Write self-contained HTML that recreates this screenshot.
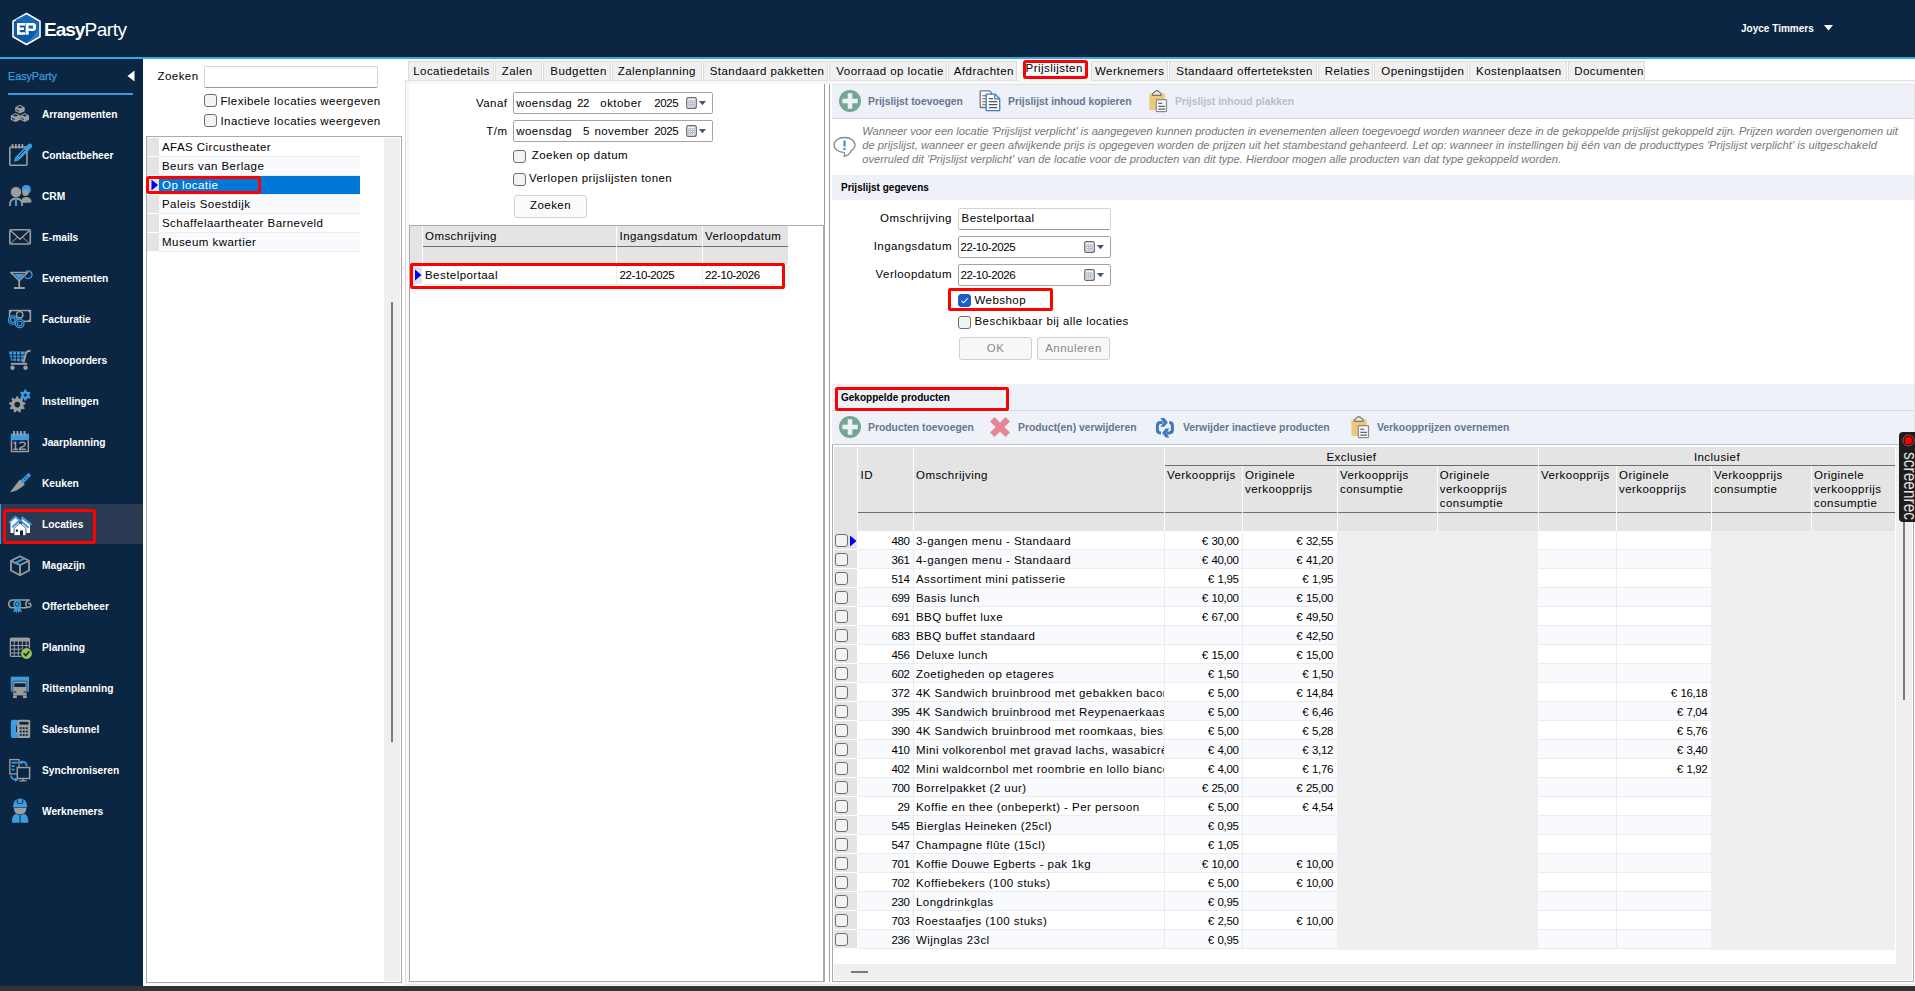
<!DOCTYPE html><html><head><meta charset="utf-8"><style>
html,body{margin:0;padding:0}
body{width:1915px;height:991px;overflow:hidden;position:relative;background:#fff;font-family:"Liberation Sans",sans-serif;color:#000}
.a{position:absolute}
.t{position:absolute;white-space:nowrap;line-height:1}
.b{font-weight:bold}
.cbx{width:11px;height:11px;border:1px solid #6e6e6e;border-radius:3px;background:#f3f3f3}
.cbx.on{background:#1a5fc8;border-color:#1a5fc8}
.cbx svg{position:absolute;left:-1px;top:-1px}
.sb{color:#fff;font-weight:bold;transform:scaleX(0.88);transform-origin:0 0}
.tb{color:#65768f;font-weight:bold;transform:scaleX(0.9);transform-origin:0 0}
.tbd{color:#b7bfcb;font-weight:bold;transform:scaleX(0.9);transform-origin:0 0}
.it{font-style:italic;color:#777}
.inp{position:absolute;box-sizing:border-box;border:1px solid #a4a4a4;border-radius:2px;background:#fff}
.btn{position:absolute;box-sizing:border-box;border:1px solid #d0d0d0;border-radius:3px;background:#fbfbfb}
.red{position:absolute;box-sizing:border-box;border:3px solid #f00;border-radius:2px}
.clip{overflow:hidden}
</style></head><body>

<div class="a" style="left:0px;top:0px;width:1915px;height:57px;background:#0b2642"></div>
<div class="a" style="left:0px;top:57px;width:1915px;height:2px;background:#35a8e0"></div>
<svg class="a" style="left:11px;top:12px" width="31" height="34" viewBox="0 0 31 34">
<path d="M15.5 1.5 L29 9.3 L29 24.7 L15.5 32.5 L2 24.7 L2 9.3 Z" fill="#0f5aa6" stroke="#fff" stroke-width="1.6"/>
<path d="M15.5 3 L27.5 10 L27.5 19 L4 7.5 Z" fill="#1a6fc0" opacity="0.7"/>
<path d="M27.5 17 L27.5 24 L15.5 31 L21 26 Z" fill="#2a8ad8" opacity="0.8"/>
<path d="M6 11 H14 V13.6 H8.8 V15.6 H13 V18 H8.8 V20.2 H14 V22.8 H6 Z" fill="#fff"/>
<path d="M14.6 11 H22 Q25 11 25 14.2 V15.8 Q25 19 22 19 H17.6 V22.8 H14.6 Z M17.6 13.5 V16.5 H21.4 Q22.2 16.5 22.2 15.6 V14.4 Q22.2 13.5 21.4 13.5 Z" fill="#fff"/>
</svg>
<div class="t" style="left:44px;top:20.22px;font-size:19px;color:#fff"><span style="font-weight:bold;letter-spacing:-1px">Easy</span><span style="letter-spacing:-0.4px">Party</span></div>
<div class="t sb" style="top:22.95px;font-size:11.4px;left:1741.00px;">Joyce Timmers</div>
<svg class="a" style="left:1824px;top:25px" width="9" height="6" viewBox="0 0 9 6"><path d="M0 0H9L4.5 5.5Z" fill="#fff"/></svg>
<div class="a" style="left:0px;top:59px;width:143px;height:927px;background:#0b2642"></div>
<div class="t" style="left:8px;top:70.91px;font-size:11.8px;color:#3f9ddf;transform:scaleX(0.91);transform-origin:0 0;-webkit-text-stroke:0.25px #3f9ddf">EasyParty</div>
<svg class="a" style="left:127px;top:70px" width="8" height="12" viewBox="0 0 8 12"><path d="M7.5 0.5V11.5L0.5 6Z" fill="#fff"/></svg>
<div class="a" style="left:8px;top:93px;width:125px;height:1.5px;background:#3a9ad9"></div>
<div class="a" style="left:0px;top:504px;width:143px;height:40px;background:#2b3a52"></div>
<div class="a" style="left:0px;top:504px;width:1px;height:40px;background:#3a9ad9"></div>
<svg class="a" style="left:0px;top:96px" width="40" height="31" viewBox="0 0 40 31"><path d="M19.95,8.8 L24.7,11.149000000000001 L24.7,15.151 L19.95,17.5 L15.2,15.151 L15.2,11.149000000000001Z" fill="#9d9d9d"/><path d="M19.95,10.100000000000001 L22.7,11.149000000000001 L19.95,12.198 L17.2,11.149000000000001Z" fill="#0b2642"/><path d="M16.4,13.149000000000001 L18.95,14.498000000000001 L18.95,15.7 L16.4,14.350999999999999Z" fill="#0b2642"/><path d="M15.6,17.0 L20.4,19.457 L20.4,23.643 L15.6,26.1 L10.8,23.643 L10.8,19.457Z" fill="#9d9d9d"/><path d="M15.6,18.3 L18.4,19.457 L15.6,20.614 L12.8,19.457Z" fill="#0b2642"/><path d="M12.0,21.457 L14.6,22.914 L14.6,24.3 L12.0,22.843Z" fill="#0b2642"/><path d="M24.7,17.0 L29.0,19.457 L29.0,23.643 L24.7,26.1 L20.4,23.643 L20.4,19.457Z" fill="#9d9d9d"/><path d="M24.7,18.3 L27.0,19.457 L24.7,20.614 L22.4,19.457Z" fill="#0b2642"/><path d="M21.599999999999998,21.457 L23.7,22.914 L23.7,24.3 L21.599999999999998,22.843Z" fill="#0b2642"/></svg>
<div class="t sb" style="top:107.98px;font-size:11.6px;left:42.00px;">Arrangementen</div>
<svg class="a" style="left:0px;top:137px" width="40" height="31" viewBox="0 0 40 31"><rect x="9.8" y="10" width="17.2" height="18.2" rx="1" fill="none" stroke="#9d9d9d" stroke-width="1.6"/><path d="M12.5 7V11.5M15.8 7V11.5M19.1 7V11.5M22.4 7V11.5" stroke="#9d9d9d" stroke-width="1.8"/><path d="M17.2 21.6 L27.3 11.5" stroke="#3d9be0" stroke-width="4.6"/><path d="M28.3 10.5 L29.8 9" stroke="#3d9be0" stroke-width="4.6" stroke-linecap="round"/><path d="M14 24.8 L15.2 19.8 L19 23.6Z" fill="#3d9be0"/><path d="M18.5 19.5 L25 13" stroke="#0b2642" stroke-width="1"/></svg>
<div class="t sb" style="top:148.98px;font-size:11.6px;left:42.00px;">Contactbeheer</div>
<svg class="a" style="left:0px;top:178px" width="40" height="31" viewBox="0 0 40 31"><circle cx="26.3" cy="11.5" r="4.6" fill="#3d9be0"/><circle cx="25.5" cy="14.8" r="3.2" fill="#9d9d9d"/><path d="M21 25 Q21 19 26 19 Q31.5 19 31.5 24.5Z" fill="#9d9d9d"/><circle cx="16" cy="14.1" r="5.6" fill="#9d9d9d" stroke="#0b2642" stroke-width="0.8"/><path d="M9.8 28 Q9.5 20.5 16 20.5 Q22.5 20.5 22.2 28" fill="none" stroke="#9d9d9d" stroke-width="1.8"/><path d="M16 20.5V28" stroke="#3d9be0" stroke-width="2.2"/></svg>
<div class="t sb" style="top:189.98px;font-size:11.6px;left:42.00px;">CRM</div>
<svg class="a" style="left:0px;top:219px" width="40" height="31" viewBox="0 0 40 31"><rect x="9.8" y="10.8" width="20.5" height="14.2" rx="1" fill="none" stroke="#9d9d9d" stroke-width="1.6"/><path d="M10.5 11.5 L20 20.2 L29.5 11.5" fill="none" stroke="#9d9d9d" stroke-width="1.4"/><path d="M10.5 24.5 L17 18.5M29.5 24.5 L23 18.5" stroke="#9d9d9d" stroke-width="1"/></svg>
<div class="t sb" style="top:230.98px;font-size:11.6px;left:42.00px;">E-mails</div>
<svg class="a" style="left:0px;top:260px" width="40" height="31" viewBox="0 0 40 31"><path d="M26 11.5 A3.8 3.8 0 1 1 25 16.8" fill="none" stroke="#3d9be0" stroke-width="1.4"/><path d="M10.8 12.5 H27.6 L19.2 20.8Z" fill="none" stroke="#9d9d9d" stroke-width="1.6" stroke-linejoin="round"/><path d="M13.8 14 H24.6 L19.2 19.3Z" fill="#3d9be0"/><path d="M19.2 20.5 V27.5M14 28 H24.8" stroke="#9d9d9d" stroke-width="1.8"/></svg>
<div class="t sb" style="top:271.98px;font-size:11.6px;left:42.00px;">Evenementen</div>
<svg class="a" style="left:0px;top:301px" width="40" height="31" viewBox="0 0 40 31"><rect x="9.6" y="9.5" width="20.8" height="10.8" fill="none" stroke="#9d9d9d" stroke-width="1.5"/><path d="M9.6 9.5h3l-3 3zM30.4 9.5h-3l3 3zM30.4 20.3h-3l3-3z" fill="#9d9d9d"/><circle cx="19.7" cy="13.8" r="3.2" fill="none" stroke="#9d9d9d" stroke-width="1.4"/><circle cx="12.8" cy="19.1" r="4.3" fill="#0b2642" stroke="#3d9be0" stroke-width="1.3"/><circle cx="12.8" cy="19.1" r="2.4" fill="none" stroke="#3d9be0" stroke-width="1.2"/><circle cx="19.7" cy="22.4" r="4.3" fill="#0b2642" stroke="#3d9be0" stroke-width="1.3"/><circle cx="19.7" cy="22.4" r="2.4" fill="none" stroke="#3d9be0" stroke-width="1.2"/></svg>
<div class="t sb" style="top:312.98px;font-size:11.6px;left:42.00px;">Facturatie</div>
<svg class="a" style="left:0px;top:342px" width="40" height="31" viewBox="0 0 40 31"><path d="M8.9 9.6 H24.8 L23.3 19.6 L11 18.6Z" fill="#3d9be0"/><path d="M12.8 10V18.5M16.5 10V19M20.3 10V19.3M9.5 13H24.3M10 16H23.8" stroke="#0b2642" stroke-width="1"/><path d="M23.5 20.5 L26 11 Q26.8 8.8 30.5 8.7" fill="none" stroke="#9d9d9d" stroke-width="2"/><path d="M10.8 21.8 H27.2" stroke="#9d9d9d" stroke-width="2"/><circle cx="12.5" cy="25.7" r="2.2" fill="#9d9d9d"/><circle cx="25.5" cy="25.7" r="2.2" fill="#9d9d9d"/></svg>
<div class="t sb" style="top:353.98px;font-size:11.6px;left:42.00px;">Inkooporders</div>
<svg class="a" style="left:0px;top:383px" width="40" height="31" viewBox="0 0 40 31"><path d="M16.58,13.33 L18.02,13.33 L18.90,15.61 L19.92,15.98 L22.06,14.80 L23.17,15.73 L22.38,18.04 L22.92,18.98 L25.32,19.45 L25.57,20.88 L23.48,22.14 L23.29,23.20 L24.82,25.11 L24.10,26.36 L21.68,25.98 L20.86,26.68 L20.81,29.12 L19.45,29.62 L17.84,27.78 L16.76,27.78 L15.15,29.62 L13.79,29.12 L13.74,26.68 L12.92,25.98 L10.50,26.36 L9.78,25.11 L11.31,23.20 L11.12,22.14 L9.03,20.88 L9.28,19.45 L11.68,18.98 L12.22,18.04 L11.43,15.73 L12.54,14.80 L14.68,15.98 L15.70,15.61Z" fill="#9d9d9d"/><circle cx="17.3" cy="21.6" r="2.8" fill="#0b2642"/><path d="M24.57,6.55 L26.03,6.55 L26.79,8.50 L27.67,9.01 L29.74,8.69 L30.47,9.96 L29.17,11.59 L29.17,12.61 L30.47,14.24 L29.74,15.51 L27.67,15.19 L26.79,15.70 L26.03,17.65 L24.57,17.65 L23.81,15.70 L22.93,15.19 L20.86,15.51 L20.13,14.24 L21.43,12.61 L21.43,11.59 L20.13,9.96 L20.86,8.69 L22.93,9.01 L23.81,8.50Z" fill="#3d9be0"/><circle cx="25.3" cy="12.1" r="1.6" fill="#0b2642"/></svg>
<div class="t sb" style="top:394.98px;font-size:11.6px;left:42.00px;">Instellingen</div>
<svg class="a" style="left:0px;top:424px" width="40" height="31" viewBox="0 0 40 31"><rect x="10.8" y="9.6" width="18.2" height="6.6" fill="#3d9be0"/><path d="M14 7V11.5M17.5 7V11.5M21 7V11.5M24.5 7V11.5" stroke="#9d9d9d" stroke-width="2"/><path d="M11.5 16.2V27.5H28.3V16.2" fill="none" stroke="#9d9d9d" stroke-width="1.5"/><path d="M13.5 19.2 L15.5 18.3 V25.2M13.3 25.2H17.8M19.3 19.6 Q19.8 18.3 22.3 18.3 Q25.3 18.3 25.3 20.3 Q25.3 21.8 22.5 22.8 Q19.6 23.8 19.6 25.2H25.8" fill="none" stroke="#9d9d9d" stroke-width="1.5"/></svg>
<div class="t sb" style="top:435.98px;font-size:11.6px;left:42.00px;">Jaarplanning</div>
<svg class="a" style="left:0px;top:465px" width="40" height="31" viewBox="0 0 40 31"><path d="M9.8 27.6 L19.8 14.6 L25 19.2 Q19 25.5 9.8 27.6Z" fill="#9d9d9d"/><path d="M22.8 16.2 L28.6 10.4" stroke="#3d9be0" stroke-width="4" stroke-linecap="round"/><circle cx="25" cy="14" r="0.7" fill="#0b2642"/><circle cx="27" cy="12" r="0.7" fill="#0b2642"/></svg>
<div class="t sb" style="top:476.98px;font-size:11.6px;left:42.00px;">Keuken</div>
<svg class="a" style="left:0px;top:506px" width="40" height="31" viewBox="0 0 40 31"><path d="M10.5 14.5 L15.5 10.5 L19 13.5 V27 H10.5Z" fill="#fff"/><path d="M22 12.5 L30 18.5 V27 H22Z" fill="#fff"/><path d="M9 16.6 L15.5 10.8 L19.5 14.3" fill="none" stroke="#3d9be0" stroke-width="1.8"/><path d="M21.3 12.6 L22.5 11.5 L31.5 18.7" fill="none" stroke="#3d9be0" stroke-width="1.8"/><path d="M14 22.5 L20 16.8 L26 22.5 V29.5 H14Z" fill="#fff" stroke="#2b3a52" stroke-width="0.8"/><path d="M12.2 21.3 L20 14.1 L28.6 21.8" fill="none" stroke="#3d9be0" stroke-width="1.9"/><rect x="15.8" y="23.5" width="2.2" height="2.2" fill="#0b2642"/><rect x="20" y="24.5" width="3" height="5" fill="#0b2642"/></svg>
<div class="t sb" style="top:517.98px;font-size:11.6px;left:42.00px;">Locaties</div>
<svg class="a" style="left:0px;top:547px" width="40" height="31" viewBox="0 0 40 31"><path d="M20 9.2 L29 13.7 L29 23.5 L20 28.2 L11 23.5 L11 13.7Z" fill="none" stroke="#9d9d9d" stroke-width="1.8" stroke-linejoin="round"/><path d="M11 13.7 L20 18 L29 13.7M20 18V28.2" fill="none" stroke="#9d9d9d" stroke-width="1.8"/><path d="M13.2 16 L23.5 10.8 L25.5 12 L15 17.3Z" fill="#3d9be0"/></svg>
<div class="t sb" style="top:558.98px;font-size:11.6px;left:42.00px;">Magazijn</div>
<svg class="a" style="left:0px;top:588px" width="40" height="31" viewBox="0 0 40 31"><path d="M13 12 H29.5 M13 19.8 H27" stroke="#9d9d9d" stroke-width="1.6"/><path d="M13 12 Q8.8 12 8.8 15.9 Q8.8 19.8 13 19.8" fill="none" stroke="#9d9d9d" stroke-width="1.6"/><path d="M29.5 12 Q25.5 13 25.8 16.5 Q26.3 19.8 29 19.2 Q31.5 18.3 30.8 16.3 Q30 14.6 28.2 15.8" fill="none" stroke="#9d9d9d" stroke-width="1.5"/><path d="M15.2 18.5 L13 24.5 L15.5 23.3 L16.8 25 L18 19.5ZM19.5 18.5 L22 24.5 L19.6 23.3 L18.3 25 L17 19.5Z" fill="#3d9be0"/><circle cx="17.3" cy="16.2" r="3.9" fill="#3d9be0"/><circle cx="17.3" cy="16.2" r="2" fill="none" stroke="#0b2642" stroke-width="0.8"/></svg>
<div class="t sb" style="top:599.98px;font-size:11.6px;left:42.00px;">Offertebeheer</div>
<svg class="a" style="left:0px;top:629px" width="40" height="31" viewBox="0 0 40 31"><rect x="10.4" y="9.3" width="19" height="18" rx="1" fill="none" stroke="#9d9d9d" stroke-width="1.3"/><rect x="10" y="8.8" width="19.8" height="3.8" rx="1" fill="#9d9d9d"/><path d="M14.3 12V27.5M18.4 12V27.5M22.3 12V27.5M26.2 12V27.5M10.4 16.5H29.4M10.4 20.2H29.4M10.4 24H29.4" stroke="#9d9d9d" stroke-width="1"/><circle cx="26.5" cy="24.5" r="6" fill="#0b2642"/><circle cx="26.5" cy="24.5" r="5.4" fill="#9cc54a"/><path d="M23.6 24.3 L25.7 26.5 L29.5 22.3" fill="none" stroke="#0b2642" stroke-width="1.6"/></svg>
<div class="t sb" style="top:640.98px;font-size:11.6px;left:42.00px;">Planning</div>
<svg class="a" style="left:0px;top:670px" width="40" height="31" viewBox="0 0 40 31"><rect x="10.8" y="6.7" width="18.2" height="14.9" fill="#3d9be0"/><rect x="12.8" y="11.2" width="14.1" height="14.5" rx="1.5" fill="#9d9d9d" stroke="#0b2642" stroke-width="0.6"/><rect x="14.2" y="13.3" width="11.3" height="3.8" rx="1" fill="#0b2642"/><path d="M13.5 22H16.3M23.4 22H26.2" stroke="#0b2642" stroke-width="1"/><rect x="13" y="25.5" width="3.8" height="2.6" fill="#9d9d9d"/><rect x="23" y="25.5" width="3.8" height="2.6" fill="#9d9d9d"/></svg>
<div class="t sb" style="top:681.98px;font-size:11.6px;left:42.00px;">Rittenplanning</div>
<svg class="a" style="left:0px;top:711px" width="40" height="31" viewBox="0 0 40 31"><rect x="17" y="8.8" width="13.2" height="18.2" rx="1.5" fill="#9d9d9d"/><rect x="19.3" y="10.8" width="9.3" height="2.8" fill="#0b2642"/><rect x="19.8" y="16.2" width="1.9" height="1.9" fill="#0b2642"/><rect x="19.8" y="19.6" width="1.9" height="1.9" fill="#0b2642"/><rect x="19.8" y="23" width="1.9" height="1.9" fill="#0b2642"/><rect x="22.8" y="16.2" width="1.9" height="1.9" fill="#0b2642"/><rect x="22.8" y="19.6" width="1.9" height="1.9" fill="#0b2642"/><rect x="22.8" y="23" width="1.9" height="1.9" fill="#0b2642"/><rect x="25.8" y="16.2" width="1.9" height="1.9" fill="#0b2642"/><rect x="25.8" y="19.6" width="1.9" height="1.9" fill="#0b2642"/><rect x="25.8" y="23" width="1.9" height="1.9" fill="#0b2642"/><path d="M12.5 8.8 H16.2 Q17.6 8.8 17.6 10.5 V13.5 Q17.6 14.8 16 15 V20.8 Q17.6 21 17.6 22.3 V25.3 Q17.6 27 16.2 27 H12.5 Q10.8 27 10.8 24.5 V11.3 Q10.8 8.8 12.5 8.8Z" fill="#3d9be0"/></svg>
<div class="t sb" style="top:722.98px;font-size:11.6px;left:42.00px;">Salesfunnel</div>
<svg class="a" style="left:0px;top:752px" width="40" height="31" viewBox="0 0 40 31"><rect x="9.8" y="7.6" width="9.2" height="14.3" fill="none" stroke="#9d9d9d" stroke-width="1.3"/><path d="M11.5 10.6H17.6M11.5 14.1H14.5M11.5 17.6H14.5" stroke="#3d9be0" stroke-width="1.8"/><rect x="17.3" y="15.5" width="12.3" height="11" fill="#0b2642" stroke="#9d9d9d" stroke-width="1.5"/><path d="M19.3 28.8H26.6M23 26.5V28.8" stroke="#9d9d9d" stroke-width="1.3"/><path d="M21 10.3 Q26 8.6 26.8 14" fill="none" stroke="#3d9be0" stroke-width="1.8"/><path d="M19 10.6 L22.5 8 L22.3 12.6Z" fill="#3d9be0"/><path d="M11 23.5 Q11.5 27.6 16.5 28" fill="none" stroke="#3d9be0" stroke-width="1.8"/><path d="M18.3 28 L15 30 L15.2 25.6Z" fill="#3d9be0"/></svg>
<div class="t sb" style="top:763.98px;font-size:11.6px;left:42.00px;">Synchroniseren</div>
<svg class="a" style="left:0px;top:793px" width="40" height="31" viewBox="0 0 40 31"><path d="M12.9 14.2 Q13.3 5.6 20.1 5.6 Q26.9 5.6 27.3 14.2Z" fill="#3d9be0"/><path d="M17.3 6.2 V10 Q20 11.2 22.8 10 V6.2" fill="none" stroke="#0b2642" stroke-width="0.9"/><path d="M13.8 14.8 Q14 21.5 20.1 21.5 Q26.2 21.5 26.4 14.8Z" fill="#9d9d9d"/><path d="M11.9 29.8 Q11.5 21.6 16.5 20.8 Q20 24 23.7 20.8 Q28.7 21.6 28.3 29.8Z" fill="#3d9be0"/><path d="M20.1 23 V30" stroke="#0b2642" stroke-width="1"/></svg>
<div class="t sb" style="top:804.98px;font-size:11.6px;left:42.00px;">Werknemers</div>
<div class="red" style="left:3px;top:509px;width:93px;height:34.5px;border-radius:3px"></div>
<div class="t " style="top:71.37px;font-size:11.5px;letter-spacing:0.45px;left:157.50px;">Zoeken</div>
<div class="inp" style="left:204px;top:66px;width:174px;height:22px;border-color:#d4d4d4;border-bottom-color:#9a9a9a"></div>
<div class="a cbx" style="left:204px;top:94px"></div>
<div class="t " style="top:96.27px;font-size:11.5px;letter-spacing:0.45px;left:220.40px;">Flexibele locaties weergeven</div>
<div class="a cbx" style="left:204px;top:114px"></div>
<div class="t " style="top:116.37px;font-size:11.5px;letter-spacing:0.45px;left:220.40px;">Inactieve locaties weergeven</div>
<div class="a" style="left:146px;top:136px;width:256px;height:847px;border:1px solid #a9a9ae;box-sizing:border-box"></div>
<div class="a" style="left:384px;top:138px;width:16px;height:843px;background:#efefef"></div>
<div class="a" style="left:391px;top:302px;width:2px;height:440px;background:#7a7a7a"></div>
<div class="a" style="left:147px;top:138px;width:12px;height:18px;background:#e4e4e4"></div>
<div class="a" style="left:159px;top:138px;width:201px;height:18px;background:#fff"></div>
<div class="a" style="left:159px;top:156px;width:201px;height:1px;background:#ececec"></div>
<div class="t " style="top:141.87px;font-size:11.5px;letter-spacing:0.45px;left:162.00px;">AFAS Circustheater</div>
<div class="a" style="left:147px;top:157px;width:12px;height:18px;background:#e4e4e4"></div>
<div class="a" style="left:159px;top:157px;width:201px;height:18px;background:#f8fafd"></div>
<div class="a" style="left:159px;top:175px;width:201px;height:1px;background:#ececec"></div>
<div class="t " style="top:160.87px;font-size:11.5px;letter-spacing:0.45px;left:162.00px;">Beurs van Berlage</div>
<div class="a" style="left:147px;top:176px;width:12px;height:18px;background:#e4e4e4"></div>
<div class="a" style="left:159px;top:176px;width:201px;height:18px;background:#0078d7"></div>
<div class="a" style="left:159px;top:194px;width:201px;height:1px;background:#ececec"></div>
<div class="t " style="top:179.87px;font-size:11.5px;letter-spacing:0.45px;left:162.00px;color:#fff">Op locatie</div>
<svg class="a" style="left:151px;top:179px" width="8" height="12" viewBox="0 0 8 12"><path d="M0.5 0.5V11.5L7 6Z" fill="#0000f0"/></svg>
<div class="a" style="left:147px;top:195px;width:12px;height:18px;background:#e4e4e4"></div>
<div class="a" style="left:159px;top:195px;width:201px;height:18px;background:#f8fafd"></div>
<div class="a" style="left:159px;top:213px;width:201px;height:1px;background:#ececec"></div>
<div class="t " style="top:198.87px;font-size:11.5px;letter-spacing:0.45px;left:162.00px;">Paleis Soestdijk</div>
<div class="a" style="left:147px;top:214px;width:12px;height:18px;background:#e4e4e4"></div>
<div class="a" style="left:159px;top:214px;width:201px;height:18px;background:#fff"></div>
<div class="a" style="left:159px;top:232px;width:201px;height:1px;background:#ececec"></div>
<div class="t " style="top:217.87px;font-size:11.5px;letter-spacing:0.45px;left:162.00px;">Schaffelaartheater Barneveld</div>
<div class="a" style="left:147px;top:233px;width:12px;height:18px;background:#e4e4e4"></div>
<div class="a" style="left:159px;top:233px;width:201px;height:18px;background:#f8fafd"></div>
<div class="a" style="left:159px;top:251px;width:201px;height:1px;background:#ececec"></div>
<div class="t " style="top:236.87px;font-size:11.5px;letter-spacing:0.45px;left:162.00px;">Museum kwartier</div>
<div class="red" style="left:146px;top:176px;width:115px;height:18px;border-width:3px;border-radius:3px"></div>
<div class="a" style="left:405px;top:80px;width:1510px;height:1px;background:#e2e2e2"></div>
<div class="a" style="left:825px;top:81px;width:1090px;height:3px;background:#f8f8f8"></div>
<div class="a" style="left:407.5px;top:61px;width:86.5px;height:19px;background:#f0f0f0;border:1px solid #dcdcdc;border-bottom:none;box-sizing:border-box"></div>
<div class="t " style="top:65.87px;font-size:11.5px;letter-spacing:0.45px;left:413.20px;">Locatiedetails</div>
<div class="a" style="left:495.0px;top:61px;width:47.0px;height:19px;background:#f0f0f0;border:1px solid #dcdcdc;border-bottom:none;box-sizing:border-box"></div>
<div class="t " style="top:65.87px;font-size:11.5px;letter-spacing:0.45px;left:501.70px;">Zalen</div>
<div class="a" style="left:543.0px;top:61px;width:67.7px;height:19px;background:#f0f0f0;border:1px solid #dcdcdc;border-bottom:none;box-sizing:border-box"></div>
<div class="t " style="top:65.87px;font-size:11.5px;letter-spacing:0.45px;left:550.30px;">Budgetten</div>
<div class="a" style="left:611.7px;top:61px;width:90.4px;height:19px;background:#f0f0f0;border:1px solid #dcdcdc;border-bottom:none;box-sizing:border-box"></div>
<div class="t " style="top:65.87px;font-size:11.5px;letter-spacing:0.45px;left:617.80px;">Zalenplanning</div>
<div class="a" style="left:703.1px;top:61px;width:125.1px;height:19px;background:#f0f0f0;border:1px solid #dcdcdc;border-bottom:none;box-sizing:border-box"></div>
<div class="t " style="top:65.87px;font-size:11.5px;letter-spacing:0.45px;left:709.70px;">Standaard pakketten</div>
<div class="a" style="left:829.2px;top:61px;width:117.6px;height:19px;background:#f0f0f0;border:1px solid #dcdcdc;border-bottom:none;box-sizing:border-box"></div>
<div class="t " style="top:65.87px;font-size:11.5px;letter-spacing:0.45px;left:836.30px;">Voorraad op locatie</div>
<div class="a" style="left:947.8px;top:61px;width:69.2px;height:19px;background:#f0f0f0;border:1px solid #dcdcdc;border-bottom:none;box-sizing:border-box"></div>
<div class="t " style="top:65.87px;font-size:11.5px;letter-spacing:0.45px;left:953.80px;">Afdrachten</div>
<div class="a" style="left:1019.0px;top:59px;width:71.6px;height:25px;background:#f8f8f8"></div>
<div class="t " style="top:63.27px;font-size:11.5px;letter-spacing:0.45px;left:1025.60px;">Prijslijsten</div>
<div class="a" style="left:1090.6px;top:61px;width:77.7px;height:19px;background:#f0f0f0;border:1px solid #dcdcdc;border-bottom:none;box-sizing:border-box"></div>
<div class="t " style="top:65.87px;font-size:11.5px;letter-spacing:0.45px;left:1095.00px;">Werknemers</div>
<div class="a" style="left:1169.3px;top:61px;width:147.4px;height:19px;background:#f0f0f0;border:1px solid #dcdcdc;border-bottom:none;box-sizing:border-box"></div>
<div class="t " style="top:65.87px;font-size:11.5px;letter-spacing:0.45px;left:1176.30px;">Standaard offerteteksten</div>
<div class="a" style="left:1317.7px;top:61px;width:55.7px;height:19px;background:#f0f0f0;border:1px solid #dcdcdc;border-bottom:none;box-sizing:border-box"></div>
<div class="t " style="top:65.87px;font-size:11.5px;letter-spacing:0.45px;left:1324.70px;">Relaties</div>
<div class="a" style="left:1374.4px;top:61px;width:93.8px;height:19px;background:#f0f0f0;border:1px solid #dcdcdc;border-bottom:none;box-sizing:border-box"></div>
<div class="t " style="top:65.87px;font-size:11.5px;letter-spacing:0.45px;left:1381.30px;">Openingstijden</div>
<div class="a" style="left:1469.2px;top:61px;width:97.4px;height:19px;background:#f0f0f0;border:1px solid #dcdcdc;border-bottom:none;box-sizing:border-box"></div>
<div class="t " style="top:65.87px;font-size:11.5px;letter-spacing:0.45px;left:1476.10px;">Kostenplaatsen</div>
<div class="a" style="left:1567.6px;top:61px;width:77.7px;height:19px;background:#f0f0f0;border:1px solid #dcdcdc;border-bottom:none;box-sizing:border-box"></div>
<div class="t " style="top:65.87px;font-size:11.5px;letter-spacing:0.45px;left:1574.20px;">Documenten</div>
<div class="red" style="left:1023px;top:60px;width:65px;height:19px;border-width:3px;border-radius:3px"></div>
<div class="a" style="left:405px;top:81px;width:420px;height:904px;background:#f7f7f7;border-left:1px solid #e0e0e0;box-sizing:border-box"></div>
<div class="a" style="left:409px;top:84px;width:415px;height:898px;background:#fff"></div>
<div class="t " style="top:98.17px;font-size:11.5px;letter-spacing:0.45px;right:1407.55px;text-align:right;">Vanaf</div>
<div class="t " style="top:126.17px;font-size:11.5px;letter-spacing:0.45px;right:1407.55px;text-align:right;">T/m</div>
<div class="inp" style="left:513px;top:92px;width:200px;height:22px"></div>
<div class="t " style="top:97.67px;font-size:11.5px;letter-spacing:0.45px;left:516.20px;">woensdag</div>
<div class="t " style="top:97.67px;font-size:11.5px;letter-spacing:-0.4px;left:577.00px;">22</div>
<div class="t " style="top:97.67px;font-size:11.5px;letter-spacing:0.45px;left:600.30px;">oktober</div>
<div class="t " style="top:97.67px;font-size:11.5px;letter-spacing:-0.4px;left:654.30px;">2025</div>
<svg class="a" style="left:686px;top:97px" width="22" height="13" viewBox="0 0 22 13"><rect x="0.7" y="0.7" width="9.6" height="10.6" rx="1.6" fill="#eef3fa" stroke="#6e6666" stroke-width="1.2"/><rect x="2.2" y="3.2" width="6.6" height="6.5" fill="#b9bdc5"/><rect x="2.9" y="3.9" width="0.9" height="0.9" fill="#fff"/><rect x="2.9" y="6.1" width="0.9" height="0.9" fill="#fff"/><rect x="2.9" y="8.3" width="0.9" height="0.9" fill="#fff"/><rect x="5.1" y="3.9" width="0.9" height="0.9" fill="#fff"/><rect x="5.1" y="6.1" width="0.9" height="0.9" fill="#fff"/><rect x="5.1" y="8.3" width="0.9" height="0.9" fill="#fff"/><rect x="7.3" y="3.9" width="0.9" height="0.9" fill="#fff"/><rect x="7.3" y="6.1" width="0.9" height="0.9" fill="#fff"/><rect x="7.3" y="8.3" width="0.9" height="0.9" fill="#fff"/><path d="M8.5 11.3 L10.3 9.5" stroke="#6e6666" stroke-width="1"/><path d="M12.9 3.9H20L16.45 8.2Z" fill="#3e5582"/></svg>
<div class="inp" style="left:513px;top:120px;width:200px;height:22px"></div>
<div class="t " style="top:125.67px;font-size:11.5px;letter-spacing:0.45px;left:516.20px;">woensdag</div>
<div class="t " style="top:125.67px;font-size:11.5px;letter-spacing:-0.4px;left:583.10px;">5</div>
<div class="t " style="top:125.67px;font-size:11.5px;letter-spacing:0.45px;left:594.40px;">november</div>
<div class="t " style="top:125.67px;font-size:11.5px;letter-spacing:-0.4px;left:654.30px;">2025</div>
<svg class="a" style="left:686px;top:125px" width="22" height="13" viewBox="0 0 22 13"><rect x="0.7" y="0.7" width="9.6" height="10.6" rx="1.6" fill="#eef3fa" stroke="#6e6666" stroke-width="1.2"/><rect x="2.2" y="3.2" width="6.6" height="6.5" fill="#b9bdc5"/><rect x="2.9" y="3.9" width="0.9" height="0.9" fill="#fff"/><rect x="2.9" y="6.1" width="0.9" height="0.9" fill="#fff"/><rect x="2.9" y="8.3" width="0.9" height="0.9" fill="#fff"/><rect x="5.1" y="3.9" width="0.9" height="0.9" fill="#fff"/><rect x="5.1" y="6.1" width="0.9" height="0.9" fill="#fff"/><rect x="5.1" y="8.3" width="0.9" height="0.9" fill="#fff"/><rect x="7.3" y="3.9" width="0.9" height="0.9" fill="#fff"/><rect x="7.3" y="6.1" width="0.9" height="0.9" fill="#fff"/><rect x="7.3" y="8.3" width="0.9" height="0.9" fill="#fff"/><path d="M8.5 11.3 L10.3 9.5" stroke="#6e6666" stroke-width="1"/><path d="M12.9 3.9H20L16.45 8.2Z" fill="#3e5582"/></svg>
<div class="a cbx" style="left:513px;top:150px"></div>
<div class="t " style="top:150.47px;font-size:11.5px;letter-spacing:0.45px;left:531.80px;">Zoeken op datum</div>
<div class="a cbx" style="left:513px;top:173px"></div>
<div class="t " style="top:173.37px;font-size:11.5px;letter-spacing:0.45px;left:529.00px;">Verlopen prijslijsten tonen</div>
<div class="btn" style="left:514px;top:195px;width:73px;height:23px"></div>
<div class="t " style="top:200.47px;font-size:11.5px;letter-spacing:0.45px;left:250.50px;width:600px;text-align:center;">Zoeken</div>
<div class="a" style="left:409px;top:225px;width:416px;height:757px;border:1px solid #a9a9ae;border-right:2px solid #a9a9ae;box-sizing:border-box"></div>
<div class="a" style="left:410px;top:226px;width:378px;height:39px;background:#e4e4e4"></div>
<div class="a" style="left:423px;top:246px;width:365px;height:1px;background:#6e6e6e"></div>
<div class="a" style="left:422px;top:226px;width:1px;height:39px;background:#fff"></div>
<div class="a" style="left:616px;top:226px;width:1px;height:39px;background:#fff"></div>
<div class="a" style="left:702px;top:226px;width:1px;height:39px;background:#fff"></div>
<div class="t " style="top:230.57px;font-size:11.5px;letter-spacing:0.45px;left:425.00px;">Omschrijving</div>
<div class="t " style="top:230.57px;font-size:11.5px;letter-spacing:0.45px;left:619.50px;">Ingangsdatum</div>
<div class="t " style="top:230.57px;font-size:11.5px;letter-spacing:0.45px;left:705.00px;">Verloopdatum</div>
<div class="a" style="left:413px;top:266px;width:9px;height:18px;background:#e4e4e4"></div>
<div class="a" style="left:788px;top:266px;width:1px;height:19px;background:#ececec"></div>
<div class="a" style="left:423px;top:284px;width:365px;height:1px;background:#ececec"></div>
<div class="a" style="left:616px;top:266px;width:1px;height:18px;background:#ececec"></div>
<div class="a" style="left:702px;top:266px;width:1px;height:18px;background:#ececec"></div>
<svg class="a" style="left:415px;top:269px" width="7" height="12" viewBox="0 0 7 12"><path d="M0 0.5V11.5L6.5 6Z" fill="#0000f0"/></svg>
<div class="t " style="top:269.87px;font-size:11.5px;letter-spacing:0.45px;left:425.00px;">Bestelportaal</div>
<div class="t " style="top:269.87px;font-size:11.5px;letter-spacing:-0.4px;left:619.50px;">22-10-2025</div>
<div class="t " style="top:269.87px;font-size:11.5px;letter-spacing:-0.4px;left:705.00px;">22-10-2026</div>
<div class="red" style="left:410px;top:263px;width:375px;height:26px"></div>
<div class="a" style="left:824px;top:84px;width:1px;height:141px;background:#9a9aa0"></div>
<div class="a" style="left:829px;top:84px;width:1px;height:898px;background:#a0a0a6"></div>
<div class="a" style="left:832px;top:84px;width:1082px;height:34px;background:#eef1f8"></div>
<div class="a" style="left:832px;top:84px;width:1082px;height:1px;background:#dce1ea"></div>
<div class="a" style="left:832px;top:118px;width:1082px;height:1px;background:#cfd6e2"></div>
<svg class="a" style="left:839px;top:90px" width="22" height="22" viewBox="0 0 22 22"><circle cx="11" cy="11" r="11" fill="#72a893"/><path d="M11 3.3V18.7M3.3 11H18.7" stroke="#eef1f8" stroke-width="4.6"/></svg>
<div class="t tb" style="top:96.16px;font-size:11.51px;left:868.00px;">Prijslijst toevoegen</div>
<svg class="a" style="left:979px;top:90px" width="23" height="23" viewBox="0 0 23 23"><path d="M1.2 0.9H10.5L12.4 2.8V17.5H1.2Z" fill="#fafafa" stroke="#7a7a7a" stroke-width="1.3" stroke-linejoin="round"/><path d="M3.3 5.7H7M3.3 8.7H7M3.3 11.7H7M3.3 14.7H7" stroke="#666" stroke-width="1.1"/><path d="M7.2 4.2H16.2L20.7 8.7V20.6H7.2Z" fill="#fff" stroke="#3f7cc0" stroke-width="1.3" stroke-linejoin="round"/><path d="M15.8 4.5V8.9H20.4" fill="none" stroke="#3f7cc0" stroke-width="1.2"/><path d="M9.8 8.6H14M9.8 11.7H18.3M9.8 14.7H18.3M9.8 17.6H18.3" stroke="#555" stroke-width="1.2"/></svg>
<div class="t tb" style="top:96.16px;font-size:11.51px;left:1008.00px;">Prijslijst inhoud kopieren</div>
<svg class="a" style="left:1149px;top:89px" width="20" height="24" viewBox="0 0 20 24"><rect x="0.4" y="4.3" width="15.3" height="16.7" rx="1.5" fill="#ecc87a"/><path d="M3.6 6.4 Q3.2 4.6 4.8 3.6 L6.5 2.2 Q7.8 1.1 9.2 2.2 L11 3.6 Q12.6 4.6 12.2 6.4Z" fill="#f6e7c4" stroke="#767676" stroke-width="1.2" stroke-linejoin="round"/><rect x="7.3" y="10.6" width="10.2" height="12" rx="0.8" fill="#f4f6fb" stroke="#8a8a8a" stroke-width="1.2"/><path d="M9.3 14.3H13.2M9.3 17.3H16M9.3 20.2H16" stroke="#666" stroke-width="1.3"/></svg>
<div class="t tbd" style="top:96.16px;font-size:11.51px;left:1175.00px;">Prijslijst inhoud plakken</div>
<svg class="a" style="left:833px;top:136px" width="23" height="22" viewBox="0 0 23 22"><path d="M11.5 1.5 C5.5 1.5 1 4.8 1 9 C1 13 5 16 10.3 16.3 Q12.3 16.8 11.2 20.4 Q16.3 19.6 18.2 14.6 C21 13 22 11 22 9 C22 4.8 17.5 1.5 11.5 1.5 Z" fill="#fff" stroke="#8a8a8a" stroke-width="1.3"/><path d="M11.5 4.5V10.5" stroke="#3a8fd8" stroke-width="2.2"/><circle cx="11.5" cy="13" r="1.2" fill="#3a8fd8"/></svg>
<div class="t it" style="top:126.22px;font-size:11.08px;left:862.30px;letter-spacing:0px">Wanneer voor een locatie 'Prijslijst verplicht' is aangegeven kunnen producten in evenementen alleen toegevoegd worden wanneer deze in de gekoppelde prijslijst gekoppeld zijn. Prijzen worden overgenomen uit</div>
<div class="t it" style="top:140.07px;font-size:11.08px;left:862.30px;letter-spacing:0.052px">de prijslijst, wanneer er geen afwijkende prijs is opgegeven worden de prijzen uit het stambestand gehanteerd. Let op: wanneer in instellingen bij één van de producttypes 'Prijslijst verplicht' is uitgeschakeld</div>
<div class="t it" style="top:153.92px;font-size:11.08px;left:862.30px;letter-spacing:0.046px">overruled dit 'Prijslijst verplicht' van de locatie voor de producten van dit type. Hierdoor mogen alle producten van dat type gekoppeld worden.</div>
<div class="a" style="left:832px;top:175px;width:1082px;height:25px;background:#eef1f8"></div>
<div class="t b" style="top:181.86px;font-size:11.51px;left:841.00px;transform:scaleX(0.87);transform-origin:0 0">Prijslijst gegevens</div>
<div class="t " style="top:213.27px;font-size:11.5px;letter-spacing:0.45px;right:963.05px;text-align:right;">Omschrijving</div>
<div class="t " style="top:241.47px;font-size:11.5px;letter-spacing:0.45px;right:963.05px;text-align:right;">Ingangsdatum</div>
<div class="t " style="top:268.87px;font-size:11.5px;letter-spacing:0.45px;right:963.05px;text-align:right;">Verloopdatum</div>
<div class="inp" style="left:958px;top:208px;width:153px;height:21.5px;border-color:#d4d4d4;border-bottom-color:#9a9a9a"></div>
<div class="t " style="top:213.27px;font-size:11.5px;letter-spacing:0.45px;left:961.60px;">Bestelportaal</div>
<div class="inp" style="left:958px;top:236px;width:153px;height:21.5px"></div>
<div class="t " style="top:242.07px;font-size:11.5px;letter-spacing:-0.4px;left:960.40px;">22-10-2025</div>
<svg class="a" style="left:1084px;top:241px" width="22" height="13" viewBox="0 0 22 13"><rect x="0.7" y="0.7" width="9.6" height="10.6" rx="1.6" fill="#eef3fa" stroke="#6e6666" stroke-width="1.2"/><rect x="2.2" y="3.2" width="6.6" height="6.5" fill="#b9bdc5"/><rect x="2.9" y="3.9" width="0.9" height="0.9" fill="#fff"/><rect x="2.9" y="6.1" width="0.9" height="0.9" fill="#fff"/><rect x="2.9" y="8.3" width="0.9" height="0.9" fill="#fff"/><rect x="5.1" y="3.9" width="0.9" height="0.9" fill="#fff"/><rect x="5.1" y="6.1" width="0.9" height="0.9" fill="#fff"/><rect x="5.1" y="8.3" width="0.9" height="0.9" fill="#fff"/><rect x="7.3" y="3.9" width="0.9" height="0.9" fill="#fff"/><rect x="7.3" y="6.1" width="0.9" height="0.9" fill="#fff"/><rect x="7.3" y="8.3" width="0.9" height="0.9" fill="#fff"/><path d="M8.5 11.3 L10.3 9.5" stroke="#6e6666" stroke-width="1"/><path d="M12.9 3.9H20L16.45 8.2Z" fill="#3e5582"/></svg>
<div class="inp" style="left:958px;top:264px;width:153px;height:21.5px"></div>
<div class="t " style="top:269.67px;font-size:11.5px;letter-spacing:-0.4px;left:960.40px;">22-10-2026</div>
<svg class="a" style="left:1084px;top:269px" width="22" height="13" viewBox="0 0 22 13"><rect x="0.7" y="0.7" width="9.6" height="10.6" rx="1.6" fill="#eef3fa" stroke="#6e6666" stroke-width="1.2"/><rect x="2.2" y="3.2" width="6.6" height="6.5" fill="#b9bdc5"/><rect x="2.9" y="3.9" width="0.9" height="0.9" fill="#fff"/><rect x="2.9" y="6.1" width="0.9" height="0.9" fill="#fff"/><rect x="2.9" y="8.3" width="0.9" height="0.9" fill="#fff"/><rect x="5.1" y="3.9" width="0.9" height="0.9" fill="#fff"/><rect x="5.1" y="6.1" width="0.9" height="0.9" fill="#fff"/><rect x="5.1" y="8.3" width="0.9" height="0.9" fill="#fff"/><rect x="7.3" y="3.9" width="0.9" height="0.9" fill="#fff"/><rect x="7.3" y="6.1" width="0.9" height="0.9" fill="#fff"/><rect x="7.3" y="8.3" width="0.9" height="0.9" fill="#fff"/><path d="M8.5 11.3 L10.3 9.5" stroke="#6e6666" stroke-width="1"/><path d="M12.9 3.9H20L16.45 8.2Z" fill="#3e5582"/></svg>
<div class="a cbx on" style="left:958px;top:294px"><svg width="13" height="13" viewBox="0 0 13 13"><path d="M3.5 6.8 L5.6 8.8 L9.6 4.4" stroke="#fff" stroke-width="1.1" fill="none"/></svg></div>
<div class="t " style="top:295.17px;font-size:11.5px;letter-spacing:0.45px;left:974.50px;">Webshop</div>
<div class="red" style="left:948px;top:288px;width:105px;height:23px;border-width:3px"></div>
<div class="a cbx" style="left:958px;top:315.5px"></div>
<div class="t " style="top:315.67px;font-size:11.5px;letter-spacing:0.45px;left:974.50px;">Beschikbaar bij alle locaties</div>
<div class="btn" style="left:959px;top:337px;width:73px;height:23px;background:#f7f7f7"></div>
<div class="t " style="top:342.77px;font-size:11.5px;letter-spacing:0.45px;left:695.50px;width:600px;text-align:center;color:#8a8a8a">OK</div>
<div class="btn" style="left:1037px;top:337px;width:73px;height:23px;background:#f7f7f7"></div>
<div class="t " style="top:342.77px;font-size:11.5px;letter-spacing:0.45px;left:773.50px;width:600px;text-align:center;color:#8a8a8a">Annuleren</div>
<div class="a" style="left:832px;top:384px;width:1082px;height:26px;background:#eef1f8"></div>
<div class="a" style="left:832px;top:410px;width:1082px;height:1px;background:#d5dbe6"></div>
<div class="t b" style="top:391.86px;font-size:11.51px;left:841.30px;transform:scaleX(0.87);transform-origin:0 0">Gekoppelde producten</div>
<div class="red" style="left:835px;top:387px;width:173.5px;height:24px"></div>
<div class="a" style="left:832px;top:411px;width:1082px;height:34px;background:#eef1f8"></div>
<div class="a" style="left:832px;top:444px;width:1082px;height:1px;background:#b9c1cd"></div>
<div class="a" style="left:1914px;top:84px;width:1px;height:361px;background:#e6e6e6"></div>
<svg class="a" style="left:839px;top:416px" width="22" height="22" viewBox="0 0 22 22"><circle cx="11" cy="11" r="11" fill="#72a893"/><path d="M11 3.3V18.7M3.3 11H18.7" stroke="#eef1f8" stroke-width="4.6"/></svg>
<div class="t tb" style="top:421.86px;font-size:11.51px;left:868.20px;">Producten toevoegen</div>
<svg class="a" style="left:989px;top:416px" width="22" height="22" viewBox="0 0 22 22"><path d="M3.2 3.2L18.8 18.8M18.8 3.2L3.2 18.8" stroke="#e58597" stroke-width="6.2"/></svg>
<div class="t tb" style="top:421.86px;font-size:11.51px;left:1017.80px;">Product(en) verwijderen</div>
<svg class="a" style="left:1153px;top:415px" width="24" height="25" viewBox="0 0 24 25"><path d="M9.5 7.6 H7.5 Q4.4 7.6 4.4 10.7 V14.8 Q4.4 17.9 7.5 17.9 H8" fill="none" stroke="#3d78b8" stroke-width="3"/><path d="M7.3 3 L11.2 3 L14.9 7.4 L11.2 11.8 L7.3 11.8 L10.6 7.4Z" fill="#3d78b8"/><path d="M16.3 7.6 Q19.4 7.6 19.4 10.7 V14.8 Q19.4 17.9 16.3 17.9 H14" fill="none" stroke="#3d78b8" stroke-width="3"/><path d="M16.4 13.4 L12.8 13.4 L9.1 17.9 L12.8 22.5 L16.4 22.5 L13.4 17.9Z" fill="#3d78b8"/></svg>
<div class="t tb" style="top:421.86px;font-size:11.51px;left:1183.20px;">Verwijder inactieve producten</div>
<svg class="a" style="left:1351px;top:415px" width="20" height="24" viewBox="0 0 20 24"><rect x="0.4" y="4.3" width="15.3" height="16.7" rx="1.5" fill="#ecc87a"/><path d="M3.6 6.4 Q3.2 4.6 4.8 3.6 L6.5 2.2 Q7.8 1.1 9.2 2.2 L11 3.6 Q12.6 4.6 12.2 6.4Z" fill="#f6e7c4" stroke="#767676" stroke-width="1.2" stroke-linejoin="round"/><rect x="7.3" y="10.6" width="10.2" height="12" rx="0.8" fill="#f4f6fb" stroke="#8a8a8a" stroke-width="1.2"/><path d="M9.3 14.3H13.2M9.3 17.3H16M9.3 20.2H16" stroke="#666" stroke-width="1.3"/></svg>
<div class="t tb" style="top:421.86px;font-size:11.51px;left:1377.30px;">Verkoopprijzen overnemen</div>
<div class="a" style="left:832px;top:445px;width:1082px;height:537px;border:1px solid #a9a9ae;border-top:none;box-sizing:border-box"></div>
<div class="a" style="left:834px;top:447px;width:1061px;height:84px;background:#e4e4e4"></div>
<div class="a" style="left:857px;top:447px;width:1px;height:84px;background:#fff"></div>
<div class="a" style="left:913px;top:447px;width:1px;height:84px;background:#fff"></div>
<div class="a" style="left:1164px;top:447px;width:1px;height:84px;background:#fff"></div>
<div class="a" style="left:1242px;top:465px;width:1px;height:66px;background:#fff"></div>
<div class="a" style="left:1337px;top:465px;width:1px;height:66px;background:#fff"></div>
<div class="a" style="left:1437px;top:465px;width:1px;height:66px;background:#fff"></div>
<div class="a" style="left:1538px;top:447px;width:1px;height:84px;background:#fff"></div>
<div class="a" style="left:1616px;top:465px;width:1px;height:66px;background:#fff"></div>
<div class="a" style="left:1711px;top:465px;width:1px;height:66px;background:#fff"></div>
<div class="a" style="left:1811px;top:465px;width:1px;height:66px;background:#fff"></div>
<div class="a" style="left:1165px;top:465px;width:373px;height:1px;background:#6e6e6e"></div>
<div class="a" style="left:1539px;top:465px;width:356px;height:1px;background:#6e6e6e"></div>
<div class="a" style="left:858px;top:512px;width:55px;height:1px;background:#6e6e6e"></div>
<div class="a" style="left:914px;top:512px;width:250px;height:1px;background:#6e6e6e"></div>
<div class="a" style="left:1165px;top:512px;width:77px;height:1px;background:#6e6e6e"></div>
<div class="a" style="left:1243px;top:512px;width:94px;height:1px;background:#6e6e6e"></div>
<div class="a" style="left:1338px;top:512px;width:99px;height:1px;background:#6e6e6e"></div>
<div class="a" style="left:1438px;top:512px;width:100px;height:1px;background:#6e6e6e"></div>
<div class="a" style="left:1539px;top:512px;width:77px;height:1px;background:#6e6e6e"></div>
<div class="a" style="left:1617px;top:512px;width:94px;height:1px;background:#6e6e6e"></div>
<div class="a" style="left:1712px;top:512px;width:99px;height:1px;background:#6e6e6e"></div>
<div class="a" style="left:1812px;top:512px;width:83px;height:1px;background:#6e6e6e"></div>
<div class="t " style="top:451.77px;font-size:11.5px;letter-spacing:0.45px;left:1051.50px;width:600px;text-align:center;">Exclusief</div>
<div class="t " style="top:451.77px;font-size:11.5px;letter-spacing:0.45px;left:1417.00px;width:600px;text-align:center;">Inclusief</div>
<div class="t " style="top:470.17px;font-size:11.5px;letter-spacing:0.45px;left:860.50px;">ID</div>
<div class="t " style="top:470.17px;font-size:11.5px;letter-spacing:0.45px;left:916.00px;">Omschrijving</div>
<div class="t " style="top:470.07px;font-size:11.5px;letter-spacing:0.45px;left:1167.00px;">Verkoopprijs</div>
<div class="t " style="top:470.07px;font-size:11.5px;letter-spacing:0.45px;left:1245.00px;">Originele</div>
<div class="t " style="top:484.07px;font-size:11.5px;letter-spacing:0.45px;left:1245.00px;">verkoopprijs</div>
<div class="t " style="top:470.07px;font-size:11.5px;letter-spacing:0.45px;left:1340.00px;">Verkoopprijs</div>
<div class="t " style="top:484.07px;font-size:11.5px;letter-spacing:0.45px;left:1340.00px;">consumptie</div>
<div class="t " style="top:470.07px;font-size:11.5px;letter-spacing:0.45px;left:1439.80px;">Originele</div>
<div class="t " style="top:484.07px;font-size:11.5px;letter-spacing:0.45px;left:1439.80px;">verkoopprijs</div>
<div class="t " style="top:498.07px;font-size:11.5px;letter-spacing:0.45px;left:1439.80px;">consumptie</div>
<div class="t " style="top:470.07px;font-size:11.5px;letter-spacing:0.45px;left:1541.00px;">Verkoopprijs</div>
<div class="t " style="top:470.07px;font-size:11.5px;letter-spacing:0.45px;left:1619.00px;">Originele</div>
<div class="t " style="top:484.07px;font-size:11.5px;letter-spacing:0.45px;left:1619.00px;">verkoopprijs</div>
<div class="t " style="top:470.07px;font-size:11.5px;letter-spacing:0.45px;left:1714.00px;">Verkoopprijs</div>
<div class="t " style="top:484.07px;font-size:11.5px;letter-spacing:0.45px;left:1714.00px;">consumptie</div>
<div class="t " style="top:470.07px;font-size:11.5px;letter-spacing:0.45px;left:1814.00px;">Originele</div>
<div class="t " style="top:484.07px;font-size:11.5px;letter-spacing:0.45px;left:1814.00px;">verkoopprijs</div>
<div class="t " style="top:498.07px;font-size:11.5px;letter-spacing:0.45px;left:1814.00px;">consumptie</div>
<div class="a" style="left:834px;top:531px;width:23px;height:18px;background:#e4e4e4"></div>
<div class="a" style="left:858px;top:531px;width:1037px;height:18px;background:#fff"></div>
<div class="a" style="left:858px;top:549px;width:1037px;height:1px;background:#ececec"></div>
<div class="a" style="left:913px;top:531px;width:1px;height:18px;background:#ececec"></div>
<div class="a" style="left:1164px;top:531px;width:1px;height:18px;background:#ececec"></div>
<div class="a" style="left:1242px;top:531px;width:1px;height:18px;background:#ececec"></div>
<div class="a" style="left:1616px;top:531px;width:1px;height:18px;background:#ececec"></div>
<div class="a cbx" style="left:835px;top:534px"></div>
<svg class="a" style="left:850px;top:535px" width="7" height="12" viewBox="0 0 7 12"><path d="M0 0.5V11.5L6.5 6Z" fill="#0000f0"/></svg>
<div class="t " style="top:536.47px;font-size:11.5px;letter-spacing:-0.4px;right:1005.60px;text-align:right;">480</div>
<div class="a clip" style="left:914px;top:531px;width:250px;height:18px"><div class="t" style="left:2px;top:5.47px;font-size:11.5px;letter-spacing:0.45px">3-gangen menu - Standaard</div></div>
<div class="t " style="top:536.47px;font-size:11.5px;letter-spacing:-0.4px;word-spacing:1px;right:676.60px;text-align:right;">€ 30,00</div>
<div class="t " style="top:536.47px;font-size:11.5px;letter-spacing:-0.4px;word-spacing:1px;right:582.10px;text-align:right;">€ 32,55</div>
<div class="a" style="left:834px;top:550px;width:23px;height:18px;background:#e4e4e4"></div>
<div class="a" style="left:858px;top:550px;width:1037px;height:18px;background:#f8fafd"></div>
<div class="a" style="left:858px;top:568px;width:1037px;height:1px;background:#ececec"></div>
<div class="a" style="left:913px;top:550px;width:1px;height:18px;background:#ececec"></div>
<div class="a" style="left:1164px;top:550px;width:1px;height:18px;background:#ececec"></div>
<div class="a" style="left:1242px;top:550px;width:1px;height:18px;background:#ececec"></div>
<div class="a" style="left:1616px;top:550px;width:1px;height:18px;background:#ececec"></div>
<div class="a cbx" style="left:835px;top:553px"></div>
<div class="t " style="top:555.47px;font-size:11.5px;letter-spacing:-0.4px;right:1005.60px;text-align:right;">361</div>
<div class="a clip" style="left:914px;top:550px;width:250px;height:18px"><div class="t" style="left:2px;top:5.47px;font-size:11.5px;letter-spacing:0.45px">4-gangen menu - Standaard</div></div>
<div class="t " style="top:555.47px;font-size:11.5px;letter-spacing:-0.4px;word-spacing:1px;right:676.60px;text-align:right;">€ 40,00</div>
<div class="t " style="top:555.47px;font-size:11.5px;letter-spacing:-0.4px;word-spacing:1px;right:582.10px;text-align:right;">€ 41,20</div>
<div class="a" style="left:834px;top:569px;width:23px;height:18px;background:#e4e4e4"></div>
<div class="a" style="left:858px;top:569px;width:1037px;height:18px;background:#fff"></div>
<div class="a" style="left:858px;top:587px;width:1037px;height:1px;background:#ececec"></div>
<div class="a" style="left:913px;top:569px;width:1px;height:18px;background:#ececec"></div>
<div class="a" style="left:1164px;top:569px;width:1px;height:18px;background:#ececec"></div>
<div class="a" style="left:1242px;top:569px;width:1px;height:18px;background:#ececec"></div>
<div class="a" style="left:1616px;top:569px;width:1px;height:18px;background:#ececec"></div>
<div class="a cbx" style="left:835px;top:572px"></div>
<div class="t " style="top:574.47px;font-size:11.5px;letter-spacing:-0.4px;right:1005.60px;text-align:right;">514</div>
<div class="a clip" style="left:914px;top:569px;width:250px;height:18px"><div class="t" style="left:2px;top:5.47px;font-size:11.5px;letter-spacing:0.45px">Assortiment mini patisserie</div></div>
<div class="t " style="top:574.47px;font-size:11.5px;letter-spacing:-0.4px;word-spacing:1px;right:676.60px;text-align:right;">€ 1,95</div>
<div class="t " style="top:574.47px;font-size:11.5px;letter-spacing:-0.4px;word-spacing:1px;right:582.10px;text-align:right;">€ 1,95</div>
<div class="a" style="left:834px;top:588px;width:23px;height:18px;background:#e4e4e4"></div>
<div class="a" style="left:858px;top:588px;width:1037px;height:18px;background:#f8fafd"></div>
<div class="a" style="left:858px;top:606px;width:1037px;height:1px;background:#ececec"></div>
<div class="a" style="left:913px;top:588px;width:1px;height:18px;background:#ececec"></div>
<div class="a" style="left:1164px;top:588px;width:1px;height:18px;background:#ececec"></div>
<div class="a" style="left:1242px;top:588px;width:1px;height:18px;background:#ececec"></div>
<div class="a" style="left:1616px;top:588px;width:1px;height:18px;background:#ececec"></div>
<div class="a cbx" style="left:835px;top:591px"></div>
<div class="t " style="top:593.47px;font-size:11.5px;letter-spacing:-0.4px;right:1005.60px;text-align:right;">699</div>
<div class="a clip" style="left:914px;top:588px;width:250px;height:18px"><div class="t" style="left:2px;top:5.47px;font-size:11.5px;letter-spacing:0.45px">Basis lunch</div></div>
<div class="t " style="top:593.47px;font-size:11.5px;letter-spacing:-0.4px;word-spacing:1px;right:676.60px;text-align:right;">€ 10,00</div>
<div class="t " style="top:593.47px;font-size:11.5px;letter-spacing:-0.4px;word-spacing:1px;right:582.10px;text-align:right;">€ 15,00</div>
<div class="a" style="left:834px;top:607px;width:23px;height:18px;background:#e4e4e4"></div>
<div class="a" style="left:858px;top:607px;width:1037px;height:18px;background:#fff"></div>
<div class="a" style="left:858px;top:625px;width:1037px;height:1px;background:#ececec"></div>
<div class="a" style="left:913px;top:607px;width:1px;height:18px;background:#ececec"></div>
<div class="a" style="left:1164px;top:607px;width:1px;height:18px;background:#ececec"></div>
<div class="a" style="left:1242px;top:607px;width:1px;height:18px;background:#ececec"></div>
<div class="a" style="left:1616px;top:607px;width:1px;height:18px;background:#ececec"></div>
<div class="a cbx" style="left:835px;top:610px"></div>
<div class="t " style="top:612.47px;font-size:11.5px;letter-spacing:-0.4px;right:1005.60px;text-align:right;">691</div>
<div class="a clip" style="left:914px;top:607px;width:250px;height:18px"><div class="t" style="left:2px;top:5.47px;font-size:11.5px;letter-spacing:0.45px">BBQ buffet luxe</div></div>
<div class="t " style="top:612.47px;font-size:11.5px;letter-spacing:-0.4px;word-spacing:1px;right:676.60px;text-align:right;">€ 67,00</div>
<div class="t " style="top:612.47px;font-size:11.5px;letter-spacing:-0.4px;word-spacing:1px;right:582.10px;text-align:right;">€ 49,50</div>
<div class="a" style="left:834px;top:626px;width:23px;height:18px;background:#e4e4e4"></div>
<div class="a" style="left:858px;top:626px;width:1037px;height:18px;background:#f8fafd"></div>
<div class="a" style="left:858px;top:644px;width:1037px;height:1px;background:#ececec"></div>
<div class="a" style="left:913px;top:626px;width:1px;height:18px;background:#ececec"></div>
<div class="a" style="left:1164px;top:626px;width:1px;height:18px;background:#ececec"></div>
<div class="a" style="left:1242px;top:626px;width:1px;height:18px;background:#ececec"></div>
<div class="a" style="left:1616px;top:626px;width:1px;height:18px;background:#ececec"></div>
<div class="a cbx" style="left:835px;top:629px"></div>
<div class="t " style="top:631.47px;font-size:11.5px;letter-spacing:-0.4px;right:1005.60px;text-align:right;">683</div>
<div class="a clip" style="left:914px;top:626px;width:250px;height:18px"><div class="t" style="left:2px;top:5.47px;font-size:11.5px;letter-spacing:0.45px">BBQ buffet standaard</div></div>
<div class="t " style="top:631.47px;font-size:11.5px;letter-spacing:-0.4px;word-spacing:1px;right:582.10px;text-align:right;">€ 42,50</div>
<div class="a" style="left:834px;top:645px;width:23px;height:18px;background:#e4e4e4"></div>
<div class="a" style="left:858px;top:645px;width:1037px;height:18px;background:#fff"></div>
<div class="a" style="left:858px;top:663px;width:1037px;height:1px;background:#ececec"></div>
<div class="a" style="left:913px;top:645px;width:1px;height:18px;background:#ececec"></div>
<div class="a" style="left:1164px;top:645px;width:1px;height:18px;background:#ececec"></div>
<div class="a" style="left:1242px;top:645px;width:1px;height:18px;background:#ececec"></div>
<div class="a" style="left:1616px;top:645px;width:1px;height:18px;background:#ececec"></div>
<div class="a cbx" style="left:835px;top:648px"></div>
<div class="t " style="top:650.47px;font-size:11.5px;letter-spacing:-0.4px;right:1005.60px;text-align:right;">456</div>
<div class="a clip" style="left:914px;top:645px;width:250px;height:18px"><div class="t" style="left:2px;top:5.47px;font-size:11.5px;letter-spacing:0.45px">Deluxe lunch</div></div>
<div class="t " style="top:650.47px;font-size:11.5px;letter-spacing:-0.4px;word-spacing:1px;right:676.60px;text-align:right;">€ 15,00</div>
<div class="t " style="top:650.47px;font-size:11.5px;letter-spacing:-0.4px;word-spacing:1px;right:582.10px;text-align:right;">€ 15,00</div>
<div class="a" style="left:834px;top:664px;width:23px;height:18px;background:#e4e4e4"></div>
<div class="a" style="left:858px;top:664px;width:1037px;height:18px;background:#f8fafd"></div>
<div class="a" style="left:858px;top:682px;width:1037px;height:1px;background:#ececec"></div>
<div class="a" style="left:913px;top:664px;width:1px;height:18px;background:#ececec"></div>
<div class="a" style="left:1164px;top:664px;width:1px;height:18px;background:#ececec"></div>
<div class="a" style="left:1242px;top:664px;width:1px;height:18px;background:#ececec"></div>
<div class="a" style="left:1616px;top:664px;width:1px;height:18px;background:#ececec"></div>
<div class="a cbx" style="left:835px;top:667px"></div>
<div class="t " style="top:669.47px;font-size:11.5px;letter-spacing:-0.4px;right:1005.60px;text-align:right;">602</div>
<div class="a clip" style="left:914px;top:664px;width:250px;height:18px"><div class="t" style="left:2px;top:5.47px;font-size:11.5px;letter-spacing:0.45px">Zoetigheden op etageres</div></div>
<div class="t " style="top:669.47px;font-size:11.5px;letter-spacing:-0.4px;word-spacing:1px;right:676.60px;text-align:right;">€ 1,50</div>
<div class="t " style="top:669.47px;font-size:11.5px;letter-spacing:-0.4px;word-spacing:1px;right:582.10px;text-align:right;">€ 1,50</div>
<div class="a" style="left:834px;top:683px;width:23px;height:18px;background:#e4e4e4"></div>
<div class="a" style="left:858px;top:683px;width:1037px;height:18px;background:#fff"></div>
<div class="a" style="left:858px;top:701px;width:1037px;height:1px;background:#ececec"></div>
<div class="a" style="left:913px;top:683px;width:1px;height:18px;background:#ececec"></div>
<div class="a" style="left:1164px;top:683px;width:1px;height:18px;background:#ececec"></div>
<div class="a" style="left:1242px;top:683px;width:1px;height:18px;background:#ececec"></div>
<div class="a" style="left:1616px;top:683px;width:1px;height:18px;background:#ececec"></div>
<div class="a cbx" style="left:835px;top:686px"></div>
<div class="t " style="top:688.47px;font-size:11.5px;letter-spacing:-0.4px;right:1005.60px;text-align:right;">372</div>
<div class="a clip" style="left:914px;top:683px;width:250px;height:18px"><div class="t" style="left:2px;top:5.47px;font-size:11.5px;letter-spacing:0.45px">4K Sandwich bruinbrood met gebakken bacon, ijsbergsla</div></div>
<div class="t " style="top:688.47px;font-size:11.5px;letter-spacing:-0.4px;word-spacing:1px;right:676.60px;text-align:right;">€ 5,00</div>
<div class="t " style="top:688.47px;font-size:11.5px;letter-spacing:-0.4px;word-spacing:1px;right:582.10px;text-align:right;">€ 14,84</div>
<div class="t " style="top:688.47px;font-size:11.5px;letter-spacing:-0.4px;word-spacing:1px;right:207.80px;text-align:right;">€ 16,18</div>
<div class="a" style="left:834px;top:702px;width:23px;height:18px;background:#e4e4e4"></div>
<div class="a" style="left:858px;top:702px;width:1037px;height:18px;background:#f8fafd"></div>
<div class="a" style="left:858px;top:720px;width:1037px;height:1px;background:#ececec"></div>
<div class="a" style="left:913px;top:702px;width:1px;height:18px;background:#ececec"></div>
<div class="a" style="left:1164px;top:702px;width:1px;height:18px;background:#ececec"></div>
<div class="a" style="left:1242px;top:702px;width:1px;height:18px;background:#ececec"></div>
<div class="a" style="left:1616px;top:702px;width:1px;height:18px;background:#ececec"></div>
<div class="a cbx" style="left:835px;top:705px"></div>
<div class="t " style="top:707.47px;font-size:11.5px;letter-spacing:-0.4px;right:1005.60px;text-align:right;">395</div>
<div class="a clip" style="left:914px;top:702px;width:250px;height:18px"><div class="t" style="left:2px;top:5.47px;font-size:11.5px;letter-spacing:0.45px">4K Sandwich bruinbrood met Reypenaerkaas, rucola</div></div>
<div class="t " style="top:707.47px;font-size:11.5px;letter-spacing:-0.4px;word-spacing:1px;right:676.60px;text-align:right;">€ 5,00</div>
<div class="t " style="top:707.47px;font-size:11.5px;letter-spacing:-0.4px;word-spacing:1px;right:582.10px;text-align:right;">€ 6,46</div>
<div class="t " style="top:707.47px;font-size:11.5px;letter-spacing:-0.4px;word-spacing:1px;right:207.80px;text-align:right;">€ 7,04</div>
<div class="a" style="left:834px;top:721px;width:23px;height:18px;background:#e4e4e4"></div>
<div class="a" style="left:858px;top:721px;width:1037px;height:18px;background:#fff"></div>
<div class="a" style="left:858px;top:739px;width:1037px;height:1px;background:#ececec"></div>
<div class="a" style="left:913px;top:721px;width:1px;height:18px;background:#ececec"></div>
<div class="a" style="left:1164px;top:721px;width:1px;height:18px;background:#ececec"></div>
<div class="a" style="left:1242px;top:721px;width:1px;height:18px;background:#ececec"></div>
<div class="a" style="left:1616px;top:721px;width:1px;height:18px;background:#ececec"></div>
<div class="a cbx" style="left:835px;top:724px"></div>
<div class="t " style="top:726.47px;font-size:11.5px;letter-spacing:-0.4px;right:1005.60px;text-align:right;">390</div>
<div class="a clip" style="left:914px;top:721px;width:250px;height:18px"><div class="t" style="left:2px;top:5.47px;font-size:11.5px;letter-spacing:0.45px">4K Sandwich bruinbrood met roomkaas, bieslook</div></div>
<div class="t " style="top:726.47px;font-size:11.5px;letter-spacing:-0.4px;word-spacing:1px;right:676.60px;text-align:right;">€ 5,00</div>
<div class="t " style="top:726.47px;font-size:11.5px;letter-spacing:-0.4px;word-spacing:1px;right:582.10px;text-align:right;">€ 5,28</div>
<div class="t " style="top:726.47px;font-size:11.5px;letter-spacing:-0.4px;word-spacing:1px;right:207.80px;text-align:right;">€ 5,76</div>
<div class="a" style="left:834px;top:740px;width:23px;height:18px;background:#e4e4e4"></div>
<div class="a" style="left:858px;top:740px;width:1037px;height:18px;background:#f8fafd"></div>
<div class="a" style="left:858px;top:758px;width:1037px;height:1px;background:#ececec"></div>
<div class="a" style="left:913px;top:740px;width:1px;height:18px;background:#ececec"></div>
<div class="a" style="left:1164px;top:740px;width:1px;height:18px;background:#ececec"></div>
<div class="a" style="left:1242px;top:740px;width:1px;height:18px;background:#ececec"></div>
<div class="a" style="left:1616px;top:740px;width:1px;height:18px;background:#ececec"></div>
<div class="a cbx" style="left:835px;top:743px"></div>
<div class="t " style="top:745.47px;font-size:11.5px;letter-spacing:-0.4px;right:1005.60px;text-align:right;">410</div>
<div class="a clip" style="left:914px;top:740px;width:250px;height:18px"><div class="t" style="left:2px;top:5.47px;font-size:11.5px;letter-spacing:0.45px">Mini volkorenbol met gravad lachs, wasabicrème</div></div>
<div class="t " style="top:745.47px;font-size:11.5px;letter-spacing:-0.4px;word-spacing:1px;right:676.60px;text-align:right;">€ 4,00</div>
<div class="t " style="top:745.47px;font-size:11.5px;letter-spacing:-0.4px;word-spacing:1px;right:582.10px;text-align:right;">€ 3,12</div>
<div class="t " style="top:745.47px;font-size:11.5px;letter-spacing:-0.4px;word-spacing:1px;right:207.80px;text-align:right;">€ 3,40</div>
<div class="a" style="left:834px;top:759px;width:23px;height:18px;background:#e4e4e4"></div>
<div class="a" style="left:858px;top:759px;width:1037px;height:18px;background:#fff"></div>
<div class="a" style="left:858px;top:777px;width:1037px;height:1px;background:#ececec"></div>
<div class="a" style="left:913px;top:759px;width:1px;height:18px;background:#ececec"></div>
<div class="a" style="left:1164px;top:759px;width:1px;height:18px;background:#ececec"></div>
<div class="a" style="left:1242px;top:759px;width:1px;height:18px;background:#ececec"></div>
<div class="a" style="left:1616px;top:759px;width:1px;height:18px;background:#ececec"></div>
<div class="a cbx" style="left:835px;top:762px"></div>
<div class="t " style="top:764.47px;font-size:11.5px;letter-spacing:-0.4px;right:1005.60px;text-align:right;">402</div>
<div class="a clip" style="left:914px;top:759px;width:250px;height:18px"><div class="t" style="left:2px;top:5.47px;font-size:11.5px;letter-spacing:0.45px">Mini waldcornbol met roombrie en lollo bianco</div></div>
<div class="t " style="top:764.47px;font-size:11.5px;letter-spacing:-0.4px;word-spacing:1px;right:676.60px;text-align:right;">€ 4,00</div>
<div class="t " style="top:764.47px;font-size:11.5px;letter-spacing:-0.4px;word-spacing:1px;right:582.10px;text-align:right;">€ 1,76</div>
<div class="t " style="top:764.47px;font-size:11.5px;letter-spacing:-0.4px;word-spacing:1px;right:207.80px;text-align:right;">€ 1,92</div>
<div class="a" style="left:834px;top:778px;width:23px;height:18px;background:#e4e4e4"></div>
<div class="a" style="left:858px;top:778px;width:1037px;height:18px;background:#f8fafd"></div>
<div class="a" style="left:858px;top:796px;width:1037px;height:1px;background:#ececec"></div>
<div class="a" style="left:913px;top:778px;width:1px;height:18px;background:#ececec"></div>
<div class="a" style="left:1164px;top:778px;width:1px;height:18px;background:#ececec"></div>
<div class="a" style="left:1242px;top:778px;width:1px;height:18px;background:#ececec"></div>
<div class="a" style="left:1616px;top:778px;width:1px;height:18px;background:#ececec"></div>
<div class="a cbx" style="left:835px;top:781px"></div>
<div class="t " style="top:783.47px;font-size:11.5px;letter-spacing:-0.4px;right:1005.60px;text-align:right;">700</div>
<div class="a clip" style="left:914px;top:778px;width:250px;height:18px"><div class="t" style="left:2px;top:5.47px;font-size:11.5px;letter-spacing:0.45px">Borrelpakket (2 uur)</div></div>
<div class="t " style="top:783.47px;font-size:11.5px;letter-spacing:-0.4px;word-spacing:1px;right:676.60px;text-align:right;">€ 25,00</div>
<div class="t " style="top:783.47px;font-size:11.5px;letter-spacing:-0.4px;word-spacing:1px;right:582.10px;text-align:right;">€ 25,00</div>
<div class="a" style="left:834px;top:797px;width:23px;height:18px;background:#e4e4e4"></div>
<div class="a" style="left:858px;top:797px;width:1037px;height:18px;background:#fff"></div>
<div class="a" style="left:858px;top:815px;width:1037px;height:1px;background:#ececec"></div>
<div class="a" style="left:913px;top:797px;width:1px;height:18px;background:#ececec"></div>
<div class="a" style="left:1164px;top:797px;width:1px;height:18px;background:#ececec"></div>
<div class="a" style="left:1242px;top:797px;width:1px;height:18px;background:#ececec"></div>
<div class="a" style="left:1616px;top:797px;width:1px;height:18px;background:#ececec"></div>
<div class="a cbx" style="left:835px;top:800px"></div>
<div class="t " style="top:802.47px;font-size:11.5px;letter-spacing:-0.4px;right:1005.60px;text-align:right;">29</div>
<div class="a clip" style="left:914px;top:797px;width:250px;height:18px"><div class="t" style="left:2px;top:5.47px;font-size:11.5px;letter-spacing:0.45px">Koffie en thee (onbeperkt) - Per persoon</div></div>
<div class="t " style="top:802.47px;font-size:11.5px;letter-spacing:-0.4px;word-spacing:1px;right:676.60px;text-align:right;">€ 5,00</div>
<div class="t " style="top:802.47px;font-size:11.5px;letter-spacing:-0.4px;word-spacing:1px;right:582.10px;text-align:right;">€ 4,54</div>
<div class="a" style="left:834px;top:816px;width:23px;height:18px;background:#e4e4e4"></div>
<div class="a" style="left:858px;top:816px;width:1037px;height:18px;background:#f8fafd"></div>
<div class="a" style="left:858px;top:834px;width:1037px;height:1px;background:#ececec"></div>
<div class="a" style="left:913px;top:816px;width:1px;height:18px;background:#ececec"></div>
<div class="a" style="left:1164px;top:816px;width:1px;height:18px;background:#ececec"></div>
<div class="a" style="left:1242px;top:816px;width:1px;height:18px;background:#ececec"></div>
<div class="a" style="left:1616px;top:816px;width:1px;height:18px;background:#ececec"></div>
<div class="a cbx" style="left:835px;top:819px"></div>
<div class="t " style="top:821.47px;font-size:11.5px;letter-spacing:-0.4px;right:1005.60px;text-align:right;">545</div>
<div class="a clip" style="left:914px;top:816px;width:250px;height:18px"><div class="t" style="left:2px;top:5.47px;font-size:11.5px;letter-spacing:0.45px">Bierglas Heineken (25cl)</div></div>
<div class="t " style="top:821.47px;font-size:11.5px;letter-spacing:-0.4px;word-spacing:1px;right:676.60px;text-align:right;">€ 0,95</div>
<div class="a" style="left:834px;top:835px;width:23px;height:18px;background:#e4e4e4"></div>
<div class="a" style="left:858px;top:835px;width:1037px;height:18px;background:#fff"></div>
<div class="a" style="left:858px;top:853px;width:1037px;height:1px;background:#ececec"></div>
<div class="a" style="left:913px;top:835px;width:1px;height:18px;background:#ececec"></div>
<div class="a" style="left:1164px;top:835px;width:1px;height:18px;background:#ececec"></div>
<div class="a" style="left:1242px;top:835px;width:1px;height:18px;background:#ececec"></div>
<div class="a" style="left:1616px;top:835px;width:1px;height:18px;background:#ececec"></div>
<div class="a cbx" style="left:835px;top:838px"></div>
<div class="t " style="top:840.47px;font-size:11.5px;letter-spacing:-0.4px;right:1005.60px;text-align:right;">547</div>
<div class="a clip" style="left:914px;top:835px;width:250px;height:18px"><div class="t" style="left:2px;top:5.47px;font-size:11.5px;letter-spacing:0.45px">Champagne flûte (15cl)</div></div>
<div class="t " style="top:840.47px;font-size:11.5px;letter-spacing:-0.4px;word-spacing:1px;right:676.60px;text-align:right;">€ 1,05</div>
<div class="a" style="left:834px;top:854px;width:23px;height:18px;background:#e4e4e4"></div>
<div class="a" style="left:858px;top:854px;width:1037px;height:18px;background:#f8fafd"></div>
<div class="a" style="left:858px;top:872px;width:1037px;height:1px;background:#ececec"></div>
<div class="a" style="left:913px;top:854px;width:1px;height:18px;background:#ececec"></div>
<div class="a" style="left:1164px;top:854px;width:1px;height:18px;background:#ececec"></div>
<div class="a" style="left:1242px;top:854px;width:1px;height:18px;background:#ececec"></div>
<div class="a" style="left:1616px;top:854px;width:1px;height:18px;background:#ececec"></div>
<div class="a cbx" style="left:835px;top:857px"></div>
<div class="t " style="top:859.47px;font-size:11.5px;letter-spacing:-0.4px;right:1005.60px;text-align:right;">701</div>
<div class="a clip" style="left:914px;top:854px;width:250px;height:18px"><div class="t" style="left:2px;top:5.47px;font-size:11.5px;letter-spacing:0.45px">Koffie Douwe Egberts - pak 1kg</div></div>
<div class="t " style="top:859.47px;font-size:11.5px;letter-spacing:-0.4px;word-spacing:1px;right:676.60px;text-align:right;">€ 10,00</div>
<div class="t " style="top:859.47px;font-size:11.5px;letter-spacing:-0.4px;word-spacing:1px;right:582.10px;text-align:right;">€ 10,00</div>
<div class="a" style="left:834px;top:873px;width:23px;height:18px;background:#e4e4e4"></div>
<div class="a" style="left:858px;top:873px;width:1037px;height:18px;background:#fff"></div>
<div class="a" style="left:858px;top:891px;width:1037px;height:1px;background:#ececec"></div>
<div class="a" style="left:913px;top:873px;width:1px;height:18px;background:#ececec"></div>
<div class="a" style="left:1164px;top:873px;width:1px;height:18px;background:#ececec"></div>
<div class="a" style="left:1242px;top:873px;width:1px;height:18px;background:#ececec"></div>
<div class="a" style="left:1616px;top:873px;width:1px;height:18px;background:#ececec"></div>
<div class="a cbx" style="left:835px;top:876px"></div>
<div class="t " style="top:878.47px;font-size:11.5px;letter-spacing:-0.4px;right:1005.60px;text-align:right;">702</div>
<div class="a clip" style="left:914px;top:873px;width:250px;height:18px"><div class="t" style="left:2px;top:5.47px;font-size:11.5px;letter-spacing:0.45px">Koffiebekers (100 stuks)</div></div>
<div class="t " style="top:878.47px;font-size:11.5px;letter-spacing:-0.4px;word-spacing:1px;right:676.60px;text-align:right;">€ 5,00</div>
<div class="t " style="top:878.47px;font-size:11.5px;letter-spacing:-0.4px;word-spacing:1px;right:582.10px;text-align:right;">€ 10,00</div>
<div class="a" style="left:834px;top:892px;width:23px;height:18px;background:#e4e4e4"></div>
<div class="a" style="left:858px;top:892px;width:1037px;height:18px;background:#f8fafd"></div>
<div class="a" style="left:858px;top:910px;width:1037px;height:1px;background:#ececec"></div>
<div class="a" style="left:913px;top:892px;width:1px;height:18px;background:#ececec"></div>
<div class="a" style="left:1164px;top:892px;width:1px;height:18px;background:#ececec"></div>
<div class="a" style="left:1242px;top:892px;width:1px;height:18px;background:#ececec"></div>
<div class="a" style="left:1616px;top:892px;width:1px;height:18px;background:#ececec"></div>
<div class="a cbx" style="left:835px;top:895px"></div>
<div class="t " style="top:897.47px;font-size:11.5px;letter-spacing:-0.4px;right:1005.60px;text-align:right;">230</div>
<div class="a clip" style="left:914px;top:892px;width:250px;height:18px"><div class="t" style="left:2px;top:5.47px;font-size:11.5px;letter-spacing:0.45px">Longdrinkglas</div></div>
<div class="t " style="top:897.47px;font-size:11.5px;letter-spacing:-0.4px;word-spacing:1px;right:676.60px;text-align:right;">€ 0,95</div>
<div class="a" style="left:834px;top:911px;width:23px;height:18px;background:#e4e4e4"></div>
<div class="a" style="left:858px;top:911px;width:1037px;height:18px;background:#fff"></div>
<div class="a" style="left:858px;top:929px;width:1037px;height:1px;background:#ececec"></div>
<div class="a" style="left:913px;top:911px;width:1px;height:18px;background:#ececec"></div>
<div class="a" style="left:1164px;top:911px;width:1px;height:18px;background:#ececec"></div>
<div class="a" style="left:1242px;top:911px;width:1px;height:18px;background:#ececec"></div>
<div class="a" style="left:1616px;top:911px;width:1px;height:18px;background:#ececec"></div>
<div class="a cbx" style="left:835px;top:914px"></div>
<div class="t " style="top:916.47px;font-size:11.5px;letter-spacing:-0.4px;right:1005.60px;text-align:right;">703</div>
<div class="a clip" style="left:914px;top:911px;width:250px;height:18px"><div class="t" style="left:2px;top:5.47px;font-size:11.5px;letter-spacing:0.45px">Roestaafjes (100 stuks)</div></div>
<div class="t " style="top:916.47px;font-size:11.5px;letter-spacing:-0.4px;word-spacing:1px;right:676.60px;text-align:right;">€ 2,50</div>
<div class="t " style="top:916.47px;font-size:11.5px;letter-spacing:-0.4px;word-spacing:1px;right:582.10px;text-align:right;">€ 10,00</div>
<div class="a" style="left:834px;top:930px;width:23px;height:18px;background:#e4e4e4"></div>
<div class="a" style="left:858px;top:930px;width:1037px;height:18px;background:#f8fafd"></div>
<div class="a" style="left:858px;top:948px;width:1037px;height:1px;background:#ececec"></div>
<div class="a" style="left:913px;top:930px;width:1px;height:18px;background:#ececec"></div>
<div class="a" style="left:1164px;top:930px;width:1px;height:18px;background:#ececec"></div>
<div class="a" style="left:1242px;top:930px;width:1px;height:18px;background:#ececec"></div>
<div class="a" style="left:1616px;top:930px;width:1px;height:18px;background:#ececec"></div>
<div class="a cbx" style="left:835px;top:933px"></div>
<div class="t " style="top:935.47px;font-size:11.5px;letter-spacing:-0.4px;right:1005.60px;text-align:right;">236</div>
<div class="a clip" style="left:914px;top:930px;width:250px;height:18px"><div class="t" style="left:2px;top:5.47px;font-size:11.5px;letter-spacing:0.45px">Wijnglas 23cl</div></div>
<div class="t " style="top:935.47px;font-size:11.5px;letter-spacing:-0.4px;word-spacing:1px;right:676.60px;text-align:right;">€ 0,95</div>
<div class="a" style="left:1337px;top:531px;width:201px;height:419px;background:#efefef"></div>
<div class="a" style="left:1711px;top:531px;width:184px;height:419px;background:#efefef"></div>
<div class="a" style="left:834px;top:964px;width:1062px;height:16px;background:#efefef"></div>
<div class="a" style="left:851px;top:971px;width:17px;height:2px;background:#7a7a7a"></div>
<div class="a" style="left:1896px;top:446px;width:16px;height:534px;background:#efefef"></div>
<div class="a" style="left:1903px;top:470px;width:2px;height:230px;background:#7a7a7a"></div>
<div class="a" style="left:143px;top:983px;width:1772px;height:3px;background:#fafafa"></div>
<div class="a" style="left:405px;top:984px;width:1510px;height:1px;background:#e4e4e4"></div>
<div class="a" style="left:0px;top:986px;width:1915px;height:5px;background:#333333"></div>
<div class="a" style="left:1899px;top:432px;width:20px;height:89.5px;background:#1d1d1d;border-radius:4px"></div>
<svg class="a" style="left:1901px;top:433px" width="15" height="15" viewBox="0 0 15 15"><circle cx="7.4" cy="7.4" r="5.5" fill="none" stroke="#e04040" stroke-width="0.9"/><circle cx="7.4" cy="7.4" r="3.6" fill="#ff0000"/></svg>
<div class="t" style="left:1919.4px;top:451.7px;font-size:15.5px;color:#e2e2e2;transform:rotate(90deg) scaleY(1.19);transform-origin:0 0">screenrec</div>
</body></html>
